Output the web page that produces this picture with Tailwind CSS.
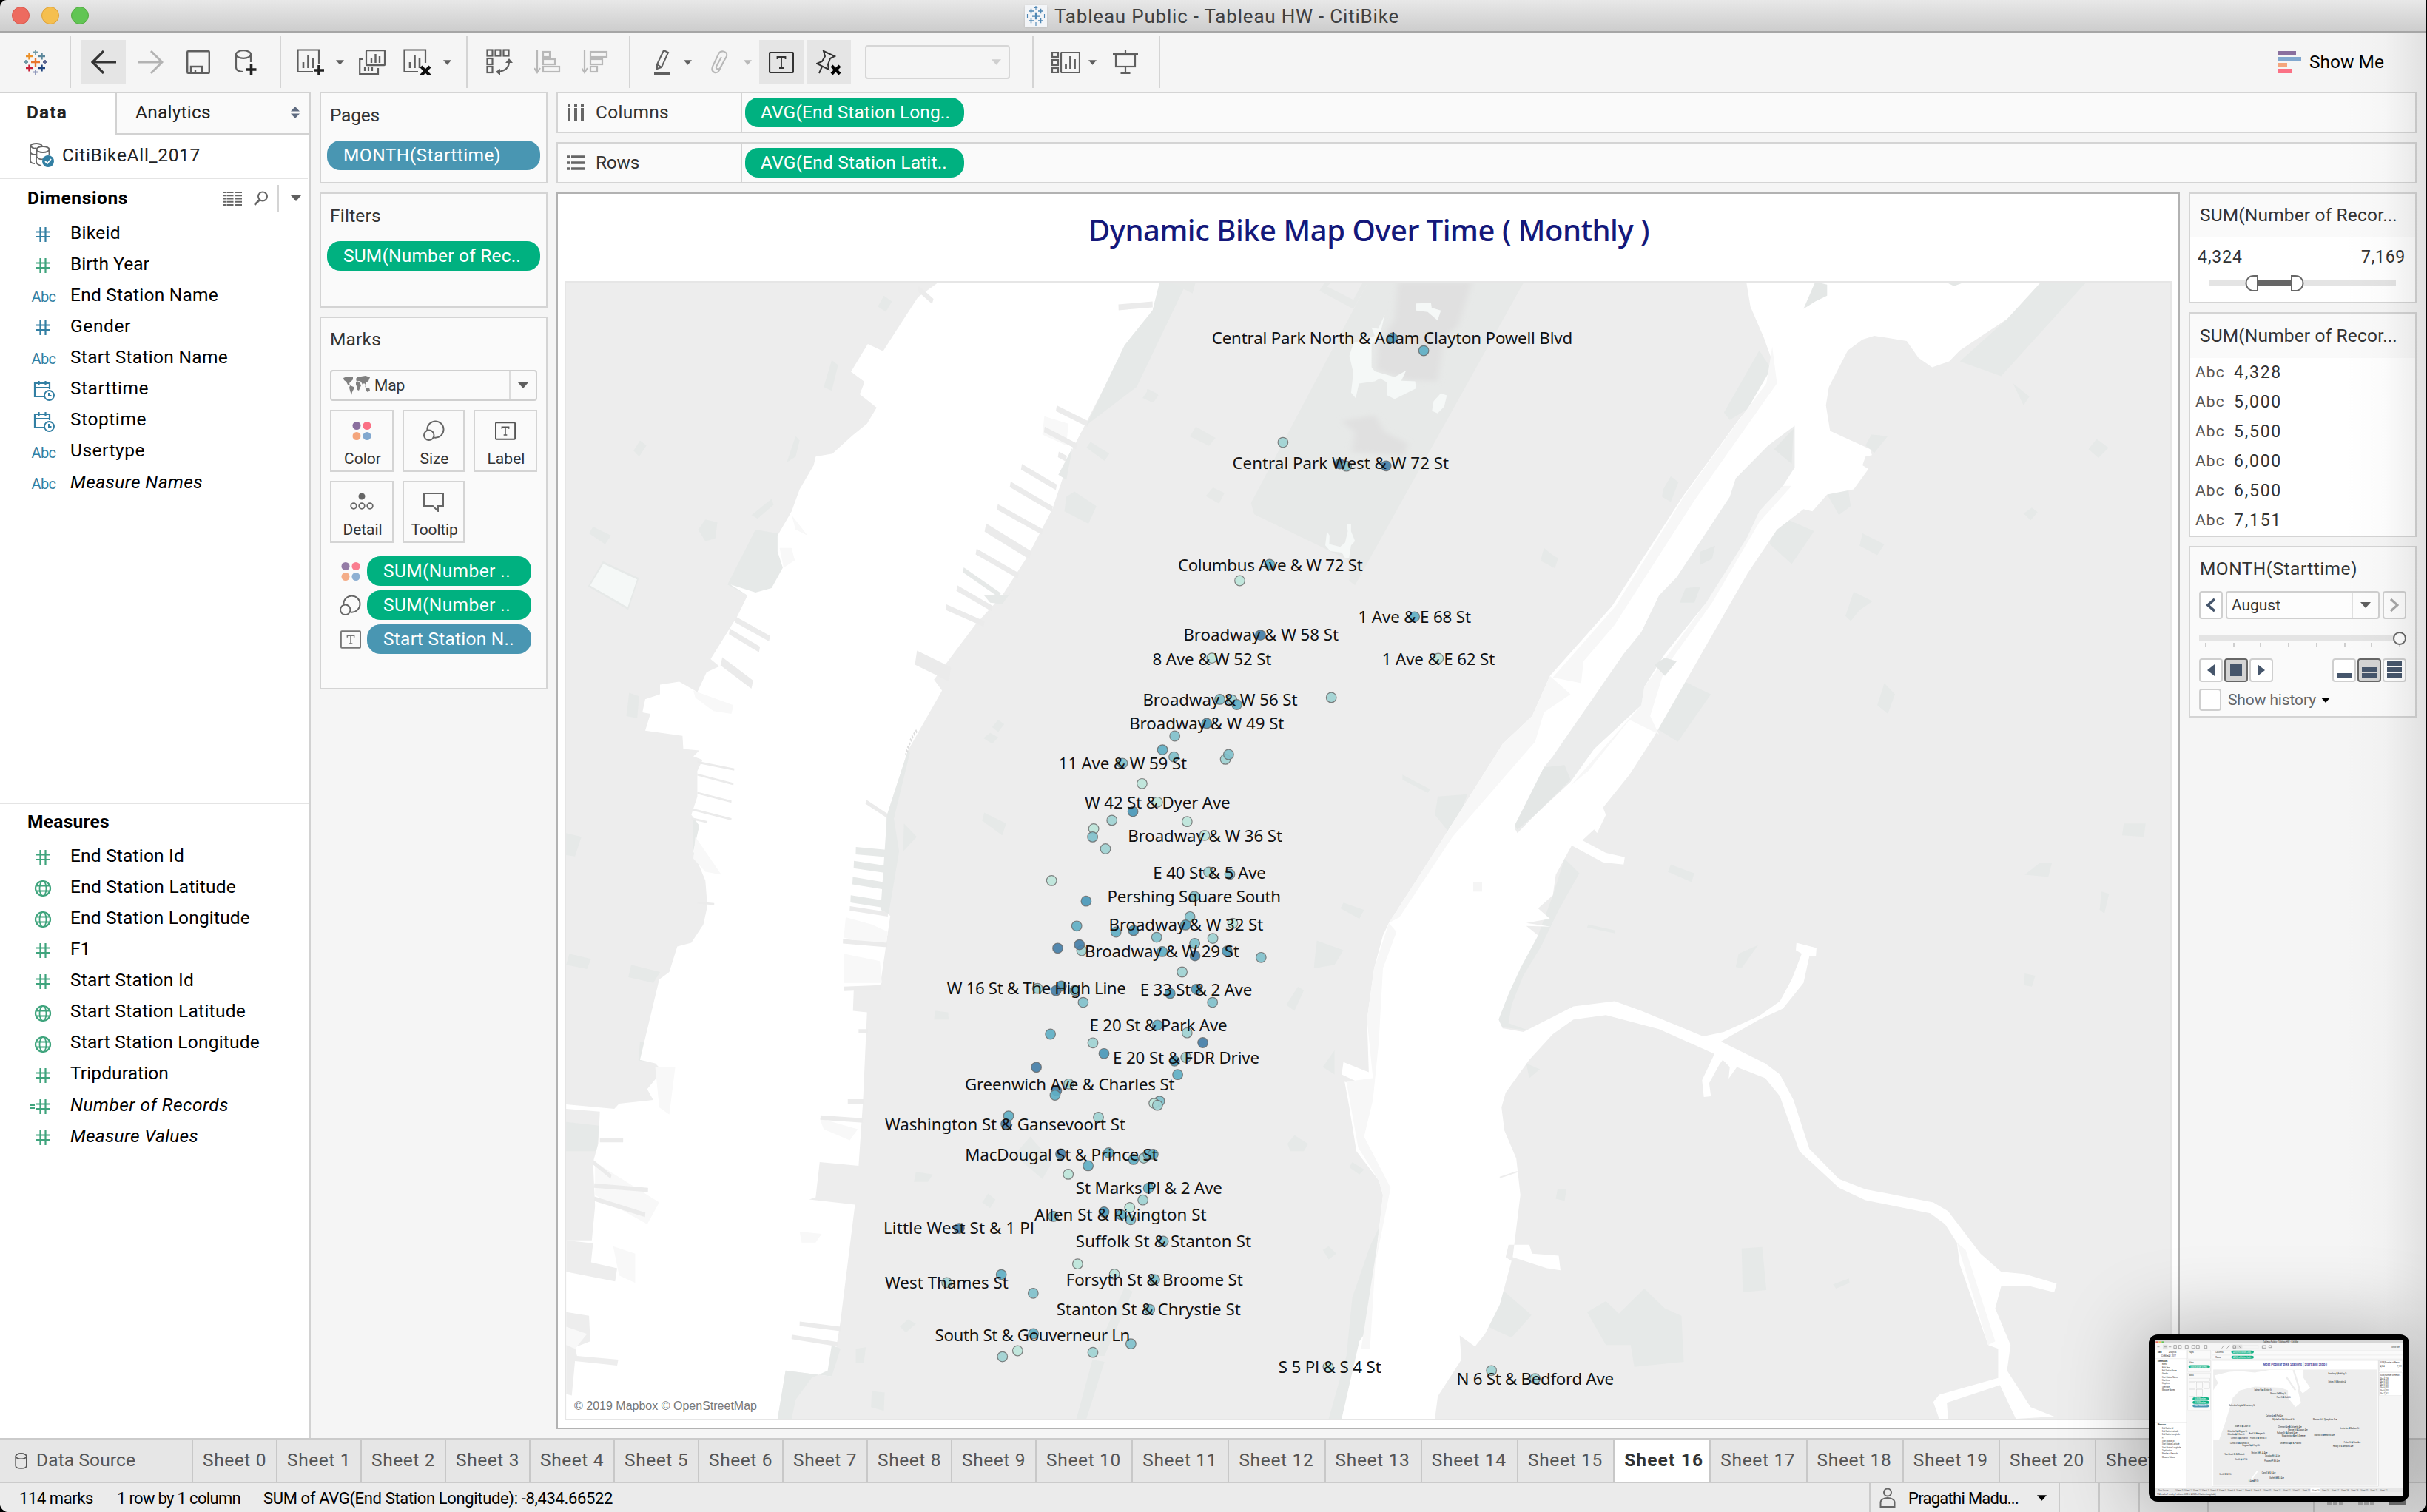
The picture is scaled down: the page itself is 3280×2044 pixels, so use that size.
<!DOCTYPE html>
<html lang="en">
<head>
<meta charset="utf-8">
<title>Tableau Public - Tableau HW - CitiBike</title>
<script src="https://cdn.jsdelivr.net/npm/@tailwindcss/browser@4"></script>
</head>
<body class="bg-black">
<svg width="0" height="0" class="absolute">
  <defs>
    <symbol id="hash" viewBox="0 0 20 20"><path d="M6.5 0V20M13.5 0V20M0 6.5H20M0 13H20" stroke="currentColor" stroke-width="2.2" fill="none"/></symbol>
    <symbol id="globe" viewBox="0 0 24 24"><circle cx="12" cy="12" r="10" fill="none" stroke="currentColor" stroke-width="2.2"/><ellipse cx="12" cy="12" rx="4.5" ry="10" fill="none" stroke="currentColor" stroke-width="1.8"/><path d="M3 8.5H21M3 15.5H21" stroke="currentColor" stroke-width="1.8"/></symbol>
    <symbol id="cal" viewBox="0 0 30 28"><path d="M14 22H2V4H22V12M2 10H22M7.500 1V7M16.500 1V7" stroke="currentColor" stroke-width="2.2" fill="none"/><circle cx="21.500" cy="20.500" r="6.500" fill="#fff" stroke="currentColor" stroke-width="2"/><path d="M21 17V21H24.500" stroke="currentColor" stroke-width="2" fill="none"/></symbol>
    <symbol id="dots4" viewBox="0 0 26 26"><circle cx="6" cy="6" r="5.500" fill="#8a6f9e"/><circle cx="20" cy="6" r="5.500" fill="#fb7185"/><circle cx="6" cy="20" r="5.500" fill="#f4a57c"/><circle cx="20" cy="20" r="5.500" fill="#82a8cf"/></symbol>
    <symbol id="size" viewBox="0 0 30 30"><circle cx="17" cy="13" r="11.500" fill="none" stroke="#666" stroke-width="2"/><circle cx="8" cy="21" r="7" fill="#fafafa" stroke="#666" stroke-width="2"/></symbol>
    <symbol id="tbox" viewBox="0 0 30 26"><rect x="1" y="1" width="28" height="24" rx="1" fill="none" stroke="currentColor" stroke-width="2"/><path d="M10 10V7.500H20V10M15 7.500V19M12.500 19H17.500" fill="none" stroke="currentColor" stroke-width="1.600"/></symbol>
    <symbol id="caret" viewBox="0 0 14 8"><path d="M0 0H14L7 8Z" fill="currentColor"/></symbol>
    <symbol id="plus" viewBox="0 0 8 8"><path d="M4 0V8M0 4H8" stroke="currentColor" stroke-width="1.800"/></symbol>
    <symbol id="cyl" viewBox="0 0 18 24"><ellipse cx="9" cy="5" rx="8" ry="4" fill="none" stroke="currentColor" stroke-width="1.800"/><path d="M1 5V19C1 24 17 24 17 19V5" fill="none" stroke="currentColor" stroke-width="1.800"/></symbol>
  </defs>
</svg>

<div class="relative flex h-[2044px] w-[3278px] flex-col overflow-hidden rounded-tl-[10px] rounded-b-[12px] bg-[#f5f5f5] font-['Roboto','Liberation_Sans',sans-serif] text-[24.500px] leading-none text-[#222]">

  <header class="flex h-11 shrink-0 items-center border-b-2 border-[#a6a6a6] bg-linear-to-b from-[#e8e8e8] to-[#cdcdcd]">
    <div class="ml-4 flex gap-4">
      <span class="size-6 rounded-full border border-[#d8574c] bg-[#ed6b5f]"></span>
      <span class="size-6 rounded-full border border-[#dba03a] bg-[#f5bf4f]"></span>
      <span class="size-6 rounded-full border border-[#51a73f] bg-[#61c554]"></span>
    </div>
    <svg class="ml-[1265px] bg-[#f3f5f8] text-[#4e87b4] shadow-sm" width="30" height="29" viewBox="0 0 30 29">
      <use href="#plus" x="10" y="9.500" width="10" height="10"/><use href="#plus" x="5" y="4.500" width="7" height="7"/><use href="#plus" x="18" y="4.500" width="7" height="7"/><use href="#plus" x="5" y="17.500" width="7" height="7"/><use href="#plus" x="18" y="17.500" width="7" height="7"/><use href="#plus" x="12.500" y="1" width="5" height="5"/><use href="#plus" x="12.500" y="23" width="5" height="5"/><use href="#plus" x="1" y="12" width="5" height="5"/><use href="#plus" x="24" y="12" width="5" height="5"/>
    </svg>
    <span class="ml-2.5 pt-0.5 whitespace-nowrap text-[26px] text-[#404040]" data-w="464">Tableau Public - Tableau HW - CitiBike</span>
  </header>

  <div class="flex h-20 shrink-0 items-center text-[#5f5f5f]">
    <svg class="ml-8" width="32" height="34" viewBox="0 0 32 34">
      <g stroke-width="2.400"><path d="M16 11V23M10 17H22" stroke="#e8762c"/><path d="M7.500 4.500V13.500M3 9H12" stroke="#eb9129"/><path d="M24.500 4.500V13.500M20 9H29" stroke="#5b879b"/><path d="M7.500 20.500V29.500M3 25H12" stroke="#c72037"/><path d="M24.500 20.500V29.500M20 25H29" stroke="#1f447e"/></g>
      <g stroke-width="1.800"><path d="M16 0V7M12.500 3.500H19.500" stroke="#7099a6"/><path d="M16 27V34M12.500 30.500H19.500" stroke="#8a93b8"/><path d="M3 14V20M0 17H6" stroke="#7099a6"/><path d="M29 14V20M26 17H32" stroke="#5b6591"/></g>
    </svg>
    <i class="ml-[30px] h-[70px] w-0.5 bg-[#d4d4d4]"></i>
    <div class="ml-3.5 flex h-15 w-15 items-center justify-center bg-[#e5e5e5]"><svg width="34" height="32" viewBox="0 0 34 32" fill="none" stroke="#333" stroke-width="3.200"><path d="M34 16H2M17 1L2 16L17 31"/></svg></div>
    <svg class="ml-[17px]" width="34" height="32" viewBox="0 0 34 32" fill="none" stroke="#b3b3b3" stroke-width="3"><path d="M0 16H32M17 1L32 16L17 31"/></svg>
    <svg class="ml-[31px]" width="32" height="32" viewBox="0 0 32 32" fill="none" stroke="currentColor" stroke-width="2.400"><rect x="1.200" y="1.200" width="29.600" height="29.600" rx="1"/><path d="M6 31V22H21V31M12 31V26"/></svg>
    <svg class="ml-[34px]" width="30" height="34" viewBox="0 0 30 34" fill="none" stroke="currentColor" stroke-width="2.200"><ellipse cx="11" cy="6.500" rx="10" ry="5.300"/><path d="M1 6.500V24C1 28 5 30 11 30M21 6.500V17"/><path d="M21.500 20V34M14.500 27H28.500" stroke="#222" stroke-width="3.600"/></svg>
    <i class="ml-[30px] h-[70px] w-0.5 bg-[#d4d4d4]"></i>
    <svg class="ml-[21px]" width="38" height="36" viewBox="0 0 38 36" fill="none" stroke="currentColor" stroke-width="2.200"><path d="M22 31H1.500V1.500H30V21"/><path d="M9 26V18M15.500 26V8M22 26V13" stroke-width="2.600"/><path d="M30 22V36M23 29H37" stroke="#222" stroke-width="3.600"/></svg>
    <svg class="ml-[15px]" width="11" height="7"><use href="#caret" width="11" height="7"/></svg>
    <svg class="ml-5" width="36" height="34" viewBox="0 0 36 34" fill="none" stroke="currentColor" stroke-width="2.200"><rect x="10" y="1.200" width="25" height="20" rx="1"/><path d="M17 18V12M22.500 18V6M28 18V9" stroke-width="2.400"/><path d="M6 13H1.200V33H26V25M8 29V24M13 29V24M18 29V24"/></svg>
    <svg class="ml-6" width="38" height="36" viewBox="0 0 38 36" fill="none" stroke="currentColor" stroke-width="2.200"><path d="M20 31H1.500V1.500H30V19"/><path d="M9 26V18M15.500 26V8M22 26V13" stroke-width="2.600"/><path d="M24 24L36 36M36 24L24 36" stroke="#111" stroke-width="4"/></svg>
    <svg class="ml-4" width="11" height="7"><use href="#caret" width="11" height="7"/></svg>
    <i class="ml-5 h-[70px] w-0.5 bg-[#d4d4d4]"></i>
    <svg class="ml-[25px]" width="36" height="36" viewBox="0 0 36 36" fill="none" stroke="currentColor" stroke-width="2.200"><rect x="1.500" y="1.500" width="7" height="8"/><rect x="12.500" y="1.500" width="7" height="8"/><rect x="23.500" y="1.500" width="7" height="8"/><rect x="1.500" y="13" width="7" height="8"/><rect x="1.500" y="24" width="7" height="8"/><path d="M31 17C31 26 26 30 16 31"/><path d="M26 19L31 13L36 19ZM19 27L13 31L19 36Z" fill="currentColor" stroke="none"/></svg>
    <svg class="ml-[29px]" width="36" height="32" viewBox="0 0 36 32" fill="none" stroke="#b8b8b8" stroke-width="2.200"><path d="M4 0V28M0 24L4 30L8 24"/><rect x="12" y="2" width="9" height="7"/><rect x="12" y="12" width="16" height="7"/><rect x="12" y="22" width="22" height="7"/></svg>
    <svg class="ml-7" width="36" height="32" viewBox="0 0 36 32" fill="none" stroke="#b8b8b8" stroke-width="2.200"><path d="M4 0V28M0 24L4 30L8 24"/><rect x="12" y="2" width="22" height="7"/><rect x="12" y="12" width="16" height="7"/><rect x="12" y="22" width="9" height="7"/></svg>
    <i class="ml-7 h-[70px] w-0.5 bg-[#d4d4d4]"></i>
    <svg class="ml-8" width="22" height="34" viewBox="0 0 22 34" fill="none" stroke="currentColor" stroke-width="2"><path d="M13 1L19 4L10 24L4 26L4 20ZM4 20L10 24"/><path d="M0 32H22" stroke-width="4"/></svg>
    <svg class="ml-[18px]" width="11" height="7"><use href="#caret" width="11" height="7"/></svg>
    <svg class="ml-[25px]" width="24" height="32" viewBox="0 0 24 32" fill="none" stroke="#b8b8b8" stroke-width="2"><path d="M19 13L12 27C9 33 0 30 3 22L11 5C14 -1 24 1 22 8L13 24C11 27 7 25 8 22L15 9"/></svg>
    <svg class="ml-[21px] text-[#b8b8b8]" width="11" height="7"><use href="#caret" width="11" height="7"/></svg>
    <div class="ml-[10px] flex size-15 items-center justify-center bg-[#e5e5e5] text-[#333]"><svg width="34" height="29" viewBox="0 0 34 29" fill="none" stroke="currentColor"><rect x="1" y="1" width="32" height="27" rx="1.500" stroke-width="2.200"/><path d="M11.500 10V7H22.500V10M17 7V22M14 22H20" stroke-width="1.800"/></svg></div>
    <div class="ml-1 flex size-15 items-center justify-center bg-[#e5e5e5]"><svg width="34" height="33" viewBox="0 0 34 33" fill="none" stroke="#333" stroke-width="2"><path d="M10 1L25 8L19 11L16 19L17 26L1 18L8 15L12 8ZM8 22L4 31"/><path d="M21 21L32 32M32 21L21 32" stroke="#000" stroke-width="4.200"/></svg></div>
    <div class="ml-[19px] flex h-[46px] w-[196px] items-center justify-end rounded-sm border-2 border-[#d6d6d6] pr-2.5 text-[#cfcfcf]"><svg width="13" height="8"><use href="#caret" width="13" height="8"/></svg></div>
    <i class="ml-[30px] h-[70px] w-0.5 bg-[#d4d4d4]"></i>
    <svg class="ml-6" width="39" height="29" viewBox="0 0 39 29" fill="none" stroke="currentColor" stroke-width="2.200"><rect x="1" y="1" width="8" height="6"/><rect x="1" y="11" width="8" height="7"/><rect x="1" y="22" width="8" height="6"/><rect x="13" y="1" width="25" height="27" rx="1"/><path d="M19.500 23V16M25.500 23V6M31.500 23V10" stroke-width="2.800"/></svg>
    <svg class="ml-[11px]" width="11" height="7"><use href="#caret" width="11" height="7"/></svg>
    <svg class="ml-[22px]" width="34" height="32" viewBox="0 0 34 32" fill="none" stroke="currentColor" stroke-width="2.200"><path d="M0 5H34" stroke-width="4"/><rect x="4" y="6" width="26" height="16"/><path d="M17 0V4M17 22V30M10.500 31H23.500"/></svg>
    <i class="ml-[28px] h-[70px] w-0.5 bg-[#d4d4d4]"></i>
    <svg class="ml-[1510px]" width="32" height="30"><path d="M0 0H25V6H0Z" fill="#8a6f9e"/><path d="M0 8H32V14H0Z" fill="#82a8cf"/><path d="M0 16H13V22H0Z" fill="#f4a57c"/><path d="M0 24H19V30H0Z" fill="#fb7185"/></svg>
    <span class="ml-[11px] text-black" data-w="99">Show Me</span>
  </div>

  <main class="flex h-[1820px] shrink-0">
    <aside class="flex w-[420px] shrink-0 flex-col border-t-2 border-r-2 border-[#d2d2d2] bg-white">
      <div class="flex h-14 shrink-0">
        <div class="flex w-[156px] items-center pb-1 pl-9 font-bold"><span data-w="53">Data</span></div>
        <div class="flex flex-1 items-center border-b-2 border-l-2 border-[#d2d2d2] bg-[#fafafa] pb-0.5 pl-[25px]"><span data-w="100">Analytics</span>
          <svg class="ml-[110px] text-[#5f6b80]" width="12" height="16" viewBox="0 0 12 16"><path d="M0 6.500L6 0L12 6.500ZM0 9.500L6 16L12 9.500Z" fill="currentColor"/></svg></div>
      </div>
      <div class="flex h-[60px] w-[416px] shrink-0 items-center border-b-2 border-[#e4e4e4] pb-0.5 pl-10">
        <svg width="34" height="34" viewBox="0 0 34 34" fill="none" stroke="#666" stroke-width="1.800"><path d="M1 4V24C1 27 4 28 7 28M1 4C4 0 14 0 17 4M1 4C4 8 7 8 9 7M1 13C3 16 5 16 9 16M9 9V25C9 29 12 30 16 31"/><ellipse cx="18" cy="9" rx="8.500" ry="4"/><path d="M9.500 9V19C12 22 14 23 18 22M26.500 9V16"/><circle cx="25" cy="25" r="8" fill="#327fa3" stroke="none"/><path d="M21 25L24 28L29 22" stroke="#fff"/></svg>
        <span class="ml-2.5" data-w="185">CitiBikeAll_2017</span>
      </div>
      <div class="mt-2 flex h-9 shrink-0 items-center pl-[37px] font-bold text-black">
        <span data-w="134">Dimensions</span>
        <svg class="ml-[131px]" width="25" height="19" viewBox="0 0 25 19" stroke="#666" stroke-width="2" fill="none"><path d="M0 1H25M0 5.200H25M0 9.500H25M0 13.700H25M0 18H25" stroke-dasharray="3 1.500 9 1.500 10 1"/></svg>
        <svg class="ml-4" width="20" height="20" viewBox="0 0 20 20" fill="none" stroke="#666" stroke-width="2"><circle cx="12" cy="7.500" r="6"/><path d="M8 12L1 19" stroke-width="2.600"/></svg>
        <i class="ml-3 h-9 w-0.5 bg-[#d4d4d4]"></i>
        <svg class="ml-4 text-[#5f5f5f]" width="14" height="8"><use href="#caret" width="14" height="8"/></svg>
      </div>
      <div id="dims" class="mt-2 h-[793px] shrink-0 border-b-2 border-[#e4e4e4] text-black"></div>
      <div class="flex h-[49px] shrink-0 items-center pl-[37px] font-bold text-black"><span data-w="109">Measures</span></div>
      <div id="meas" class="text-black"></div>
    </aside>

    <section class="ml-3 flex w-[308px] shrink-0 flex-col gap-3 text-[#333]">
      <div class="flex h-[124px] flex-col border-2 border-[#d4d4d4] bg-[#fafafa] px-2">
        <div class="flex h-[64px] items-center pb-1 pl-1"><span data-w="65">Pages</span></div>
        <div class="flex h-10 items-center rounded-[18px] bg-[#4996b2] pl-[22px] text-white"><span data-w="211">MONTH(Starttime)</span></div>
      </div>
      <div class="flex h-[156px] flex-col border-2 border-[#d4d4d4] bg-[#fafafa] px-2">
        <div class="flex h-[64px] items-center pb-1 pl-1"><span data-w="67">Filters</span></div>
        <div class="flex h-10 items-center rounded-[18px] bg-[#00b180] pl-[22px] text-white"><span data-w="238">SUM(Number of Rec..</span></div>
      </div>
      <div class="flex h-[504px] flex-col border-2 border-[#d4d4d4] bg-[#fafafa] px-3">
        <div class="flex h-[61px] items-center pb-0.5"><span data-w="67">Marks</span></div>
        <div class="mt-[9px] flex h-[42px] w-[280px] items-center rounded-sm border-2 border-[#cfcfcf] text-[21px]">
          <svg class="ml-4" width="36" height="26" viewBox="0 0 36 26" fill="#808080"><path d="M0 3L5 1L9 2L13 1L13 5L10 8L8 10L9 13L6 12L4 8L1 6ZM9 13L14 15L14 18L12 22L11 26L9 20L8 16ZM17 4L19 2L24 1L30 0L36 2L34 7L31 9L31 13L28 10L26 12L24 8L21 7L18 8ZM17 9L22 9L24 13L21 20L19 19L19 14L17 13ZM30 17L35 16L36 20L33 22L30 20ZM29 13L31 15L30 16Z"/></svg>
          <span class="ml-1.5" data-w="39">Map</span>
          <i class="ml-[143px] h-full w-0.5 bg-[#dcdcdc]"></i>
          <svg class="ml-2.5 text-[#5f5f5f]" width="14" height="8"><use href="#caret" width="14" height="8"/></svg>
        </div>
        <div id="marks" class="mt-3 grid grid-cols-[86px_84px_86px] gap-x-3 gap-y-3 text-[21px]"></div>
        <div class="mt-[18px] flex flex-col gap-1.5 text-white">
          <div class="flex items-center"><svg class="ml-[15px] opacity-90" width="26" height="27"><use href="#dots4" width="26" height="27"/></svg><div class="ml-[9px] flex h-10 w-[222px] items-center rounded-[18px] bg-[#00b180] pl-[22px]"><span data-w="170">SUM(Number ..</span></div></div>
          <div class="flex items-center"><svg class="ml-[13px]" width="29" height="29"><use href="#size" width="29" height="29"/></svg><div class="ml-2 flex h-10 w-[222px] items-center rounded-[18px] bg-[#00b180] pl-[22px]"><span data-w="170">SUM(Number ..</span></div></div>
          <div class="flex items-center"><svg class="ml-[14px] text-[#777]" width="28" height="25"><use href="#tbox" width="28" height="25"/></svg><div class="ml-2 flex h-10 w-[222px] items-center rounded-[18px] bg-[#4996b2] pl-[22px]"><span data-w="175">Start Station N..</span></div></div>
        </div>
      </div>
    </section>

    <div class="ml-3 flex w-[2514px] shrink-0 flex-col gap-3">
      <div class="flex h-14 shrink-0 items-center border-2 border-[#d4d4d4] bg-[#fafafa] text-[#333]">
        <svg class="ml-3" width="24" height="24" viewBox="0 0 24 24" stroke="#666" stroke-width="4"><path d="M3 0V4M12 0V4M21 0V4M3 6V24M12 6V24M21 6V24"/></svg>
        <span class="ml-[15px]" data-w="97">Columns</span>
        <i class="ml-[99px] h-full w-0.5 bg-[#d4d4d4]"></i>
        <div class="ml-1 flex h-10 w-[296px] items-center rounded-[18px] bg-[#00b180] pl-[21px] text-white"><span data-w="254">AVG(End Station Long..</span></div>
      </div>
      <div class="flex h-14 shrink-0 items-center border-2 border-[#d4d4d4] bg-[#fafafa] text-[#333]">
        <svg class="ml-3" width="24" height="20" viewBox="0 0 24 20" stroke="#666" stroke-width="3.600"><path d="M0 2H4M0 10H4M0 18H4M6 2H24M6 10H24M6 18H24"/></svg>
        <span class="ml-[15px]" data-w="57">Rows</span>
        <i class="ml-[139px] h-full w-0.5 bg-[#d4d4d4]"></i>
        <div class="ml-1 flex h-10 w-[296px] items-center rounded-[18px] bg-[#00b180] pl-[21px] text-white"><span data-w="250">AVG(End Station Latit..</span></div>
      </div>

      <div class="flex h-[1672px] gap-3">
        <div class="flex h-[1672px] w-[2194px] flex-col items-center border-2 border-[#b2b2b2] bg-white">
          <h1 class="flex h-[118px] items-start pt-[27px] font-['Noto_Sans','Open_Sans',sans-serif] text-[40px] leading-[44px] font-medium text-[#14187a]"><span class="whitespace-pre" data-w="756">Dynamic Bike Map Over Time ( Monthly )</span></h1>
          <svg id="map" class="border-2 border-[#e6e6e6] font-['Noto_Sans','Open_Sans',sans-serif]" width="2172" height="1540" viewBox="765 382 2168 1536">
            <rect x="764" y="380" width="2172" height="1540" fill="#ededed"/>
            <!-- New Jersey shore, Hudson River -->
            <g transform="translate(750 370) scale(.54209 .98853)">
              <g fill="#e6e9e8">
                <path d="M555 355L500 350L430 425L480 440L500 436L540 432L572 400Z"/>
                <path d="M345 735L390 770L385 795L345 795ZM28 1160L110 1165L105 1200L28 1200ZM190 945L262 955L245 970L183 962ZM212 1050L303 1062L295 1082L208 1076Z"/>
                <path d="M85 355L95 346L140 358L125 370ZM357 350L375 336L405 340L400 362L375 366ZM578 258L600 222L610 228L600 250ZM196 242L212 228L228 235L210 250ZM670 155L690 118L706 125L690 160ZM28 765L66 770L50 797L28 795ZM36 930L90 937L80 951L28 945ZM178 605L185 573L210 578L205 608ZM490 330L540 308L545 316L505 335ZM805 45L820 30L840 38L825 52Z"/>
              </g>
              <path d="M958 11L905 32L860 70L818 106L780 96L738 134L772 148L760 165L802 183L778 205L740 222L692 246L650 250L645 262L610 295L590 325L555 358L555 380L568 402L540 430L500 436L438 425L480 440L455 468L388 527L410 537L378 545L355 572L310 558L262 562L262 575L225 582L218 600L238 602L225 625L318 632L320 650L360 652L345 660L368 665L355 680L355 715L340 740L360 755L345 790L375 830L380 865L370 890L340 915L305 920L285 955L260 965L212 1075L250 1080L268 1090L230 1115L245 1130L160 1135L148 1142L28 1136L28 1142L112 1146L108 1190L95 1215L100 1275L92 1322L28 1322L28 1566L555 1566L575 1500L690 1508L712 1432L748 1273L634 1266L650 1263L660 1215L757 1220L768 1132L778 1010L743 1008L745 978L810 977L836 878L815 870L828 792L825 745L880 652L965 570L945 555L1000 515L1048 480L1115 440L1180 385L1240 322L1290 240L1325 203L1370 155L1420 98L1490 50L1508 11Z" fill="#fff"/>
              <path d="M28 1322L95 1326L90 1352L155 1360L150 1378L28 1365ZM28 1420L85 1425L88 1460L50 1468L55 1480L158 1485L155 1493L50 1487L42 1534L28 1532Z" fill="#ededed"/>
              <g fill="#f8f8f8"><path d="M345 570L445 590L440 602L395 598L350 580ZM560 375L590 375L598 392L570 402ZM590 330L630 358L600 350ZM350 770L415 822L375 818L345 800ZM250 1085L300 1085L285 1150L260 1140ZM1220 195L1280 205L1275 235L1215 220ZM725 880L790 890L830 900L825 920L720 908ZM720 930L810 940L815 970L720 970ZM610 1310L665 1313L650 1325L615 1325ZM145 1330L200 1340L200 1380L160 1370ZM100 1215L260 1270L230 1300L100 1260ZM660 1155L755 1170L735 1185L670 1170ZM28 1440L80 1450L50 1470L28 1465Z"/></g>
              <g stroke="#ebebeb" fill="none" stroke-width="8">
                <path d="M1250 184L1330 206M1220 213L1300 236M1255 247L1275 253M1163 264L1250 292M1135 288L1240 322M1103 319L1215 353M1050 380L1155 413M1002 430L1090 458M975 456L1070 479M450 473L535 499M435 489L510 514M905 20L942 38M1405 46L1490 42"/>
                <path d="M1073 347L1185 385M415 530L492 562" stroke-width="12"/>
                <path d="M900 525L985 548" stroke-width="20"/>
                <path d="M355 668L447 678M355 685L445 698M355 710L440 722M345 733L440 746M340 745L380 750" stroke-width="3"/>
                <path d="M775 722L830 742M610 1436L712 1443M590 1454L705 1464M662 1154L768 1158M718 913L828 918M735 868L830 876M720 978L812 976M730 1132L770 1132M757 1036L780 1036M98 1247L232 1253M98 1265L225 1287M95 1215L140 1235M112 1185L170 1185" stroke-width="6"/>
                <path d="M355 860L397 862" stroke-width="3"/>
              </g>
              <g stroke="#e6e9e8" fill="none"><path d="M750 789L830 793M745 808L830 815M742 830L830 838M737 855L830 863" stroke-width="10"/><path d="M1018 405L1110 440" stroke-width="7"/></g>
              <g fill="#e6e9e8">
                <path d="M828 740L880 652L885 655L845 745L858 790L832 875L812 870ZM870 752L902 770L868 790ZM1420 98L1490 50L1508 11L1568 11L1568 20L1450 155L1325 207L1370 155ZM1275 305L1295 298L1350 318L1330 342L1270 325ZM1325 238L1335 230L1382 246L1370 256ZM1065 748L1070 737L1125 752L1115 768ZM1070 440L1130 440L1145 430L1115 452L1085 450ZM1255 275L1290 238L1275 282ZM575 1500L690 1508L712 1470L690 1465L680 1500L640 1510L600 1540L590 1566L555 1566ZM1185 1180L1240 1215L1215 1238L1145 1205ZM948 1008L980 1010L982 1020L945 1020ZM900 1228L942 1232L930 1242L895 1242ZM1068 635L1085 628L1105 634L1090 643ZM1090 620L1105 610L1120 616L1105 627Z"/>
                <path d="M860 1440L880 1430L900 1436L875 1448ZM1065 1270L1080 1258L1098 1266L1085 1278ZM750 1470L775 1468L770 1490L750 1490ZM790 1528L822 1530L820 1555L788 1550ZM1420 1386L1440 1392L1370 1480L1345 1480ZM1340 1485L1370 1488L1325 1566L1300 1566ZM1465 170L1480 158L1504 165L1490 176Z"/>
              </g>
              <path d="M85 427L120 395L207 417L182 458Z" fill="#f5f8f7" stroke="#e6e9e8" stroke-width="3"/>
              <path d="M902 625L890 634L882 645L875 658" stroke="#ddd" stroke-width="5" stroke-dasharray="3 3" fill="none"/>
              <rect x="37" y="1536" width="480" height="26" fill="#fff" fill-opacity=".55"/>
            </g>
            <!-- Central Park -->
            <g transform="translate(1550 370) scale(.44643 .38265)">
              <defs><filter id="soft" x="-20%" y="-20%" width="140%" height="140%"><feGaussianBlur stdDeviation="9"/></filter></defs>
              <path d="M670 28L315 810L325 850L590 1000L622 1020L612 1085L630 1100L1142 28Z" fill="#e7e9e8"/>
              <path d="M540 28L670 28L625 125L522 60ZM68 28L148 28L138 70ZM148 540L208 580L188 608L130 575ZM200 755L235 775L218 812L178 785ZM0 408L35 430L20 455L0 445ZM1205 982L1246 1005L1235 1040L1193 1015Z" fill="#e7e9e8"/>
              <path d="M560 28L655 28L625 92L545 45Z" fill="#ededed"/>
              <g fill="#e0e0e0" filter="url(#soft)"><path d="M760 28L985 28L940 190L900 220L880 380L790 375L695 340L700 250L750 160ZM590 520L690 500L720 560L790 600L780 640L620 630L630 560Z"/></g>
              <g fill="#f5f8f7"><path d="M720 145L700 195L680 190L690 220L625 245L613 290L625 350L618 420L632 440L642 388L690 380L706 370L728 385L728 430L750 443L815 405L812 380L770 378L785 342L750 365L690 345L680 330L680 250L705 220ZM815 105L860 103L862 120L890 130L880 165L850 135L815 130ZM890 422L908 430L900 470L880 493L863 485L868 450ZM605 883L618 883L618 910L630 945L618 960L612 1005L600 1005L590 985L555 980L540 960L545 910L553 925L552 955L585 965L600 950L608 910Z"/></g>
            </g>
            <!-- East River, Newtown Creek -->
            <g transform="translate(1700 370) scale(.79719 .98853)">
              <g fill="#e6e9e8">
                <path d="M870 130L830 185L800 200L790 190L850 105ZM1328 11L1405 11L1260 140L1190 120L1270 62ZM1280 150L1308 168L1298 180ZM1040 220L1068 222L1045 245L1030 235ZM985 330L1005 318L1000 290L965 302ZM870 350L895 335L943 352L905 397L868 370ZM1025 355L1062 370L1050 385L1020 372ZM1408 240L1422 226L1442 238L1425 252ZM1298 328L1312 320L1322 326L1310 337ZM1010 435L1042 448L1020 460L1005 475L996 468ZM1062 560L1080 575L1068 602L1050 590ZM690 545L768 575L712 640L672 620ZM1468 752L1505 752L1502 770L1465 768ZM1325 806L1346 806L1340 825L1300 822ZM1430 845L1443 848L1435 875L1427 870ZM695 818L700 808L740 820L735 832ZM815 930L848 918L820 950L810 948ZM1300 957L1318 960L1312 975L1298 973Z"/>
                <path d="M500 850L520 800L545 820L510 870L480 920L450 960L430 1000L425 1025L460 1035L410 1030L408 1015L440 950L475 905ZM305 715L355 712L330 770L300 740ZM96 940L100 912L145 925L130 945L95 950ZM62 1008L48 1000L68 975L78 980ZM110 1085L130 1062L130 1095ZM145 860L180 870L172 882L140 868ZM820 1333L855 1331L862 1390L822 1393ZM558 1420L590 1405L612 1422L655 1388L690 1415L718 1425L722 1488L638 1495L632 1465L590 1465ZM975 1382L1002 1374L1003 1380L980 1388ZM395 1405L415 1390L464 1424L430 1455L390 1440ZM508 1252L523 1252L520 1268L505 1265ZM455 1080L478 1088L460 1100ZM50 1190L62 1178L85 1190L78 1200L55 1200ZM110 1335L120 1330L133 1340L120 1348ZM205 1305L190 1330L160 1400L150 1480L120 1566L142 1566L172 1460L185 1445Z"/>
                <path d="M687 295L700 277L713 285L700 312L685 305ZM485 375L508 390L500 402L480 390ZM245 685L292 705L288 710L245 692ZM560 890L606 898L605 902L558 894ZM160 1215L180 1225L172 1232L155 1222Z"/>
              </g>
              <path d="M828 11L835 45L858 88L870 115L870 130L830 185L815 200L720 305L600 455L495 550L465 605L415 643L300 790L222 888L212 905L197 950L185 1020L188 1092L145 1078L142 1095L168 1105L165 1110L147 1105L155 1140L167 1200L205 1240L212 1260L205 1310L185 1445L172 1460L142 1566L300 1566L305 1535L345 1485L342 1452L368 1467L385 1450L410 1410L430 1350L420 1345L425 1328L460 1328L465 1340L510 1343L513 1363L490 1360L432 1345L445 1260L438 1210L418 1172L413 1140L420 1120L460 1075L500 1040L535 1020L590 1014L680 1033L774 1067L753 1103L756 1126L768 1125L765 1107L782 1082L788 1075L800 1085L798 1101L812 1085L860 1100L885 1125L918 1200L985 1250L1030 1267L1140 1285L1165 1300L1185 1325L1190 1355L1238 1465L1255 1470L1255 1510L1155 1533L1145 1543L1155 1566L1170 1566L1168 1544L1258 1520L1285 1566L1350 1563L1310 1550L1270 1500L1276 1465L1250 1415L1260 1385L1310 1385L1350 1393L1354 1381L1300 1368L1260 1365L1225 1340L1170 1282L1145 1270L1030 1252L985 1238L935 1197L908 1130L885 1095L860 1080L785 1050L850 1020L890 1005L925 970L935 933L946 933L947 922L913 915L912 925L922 930L905 965L885 995L850 1015L790 1037L755 1043L650 1008L605 995L535 1002L450 1037L415 1032L408 1020L425 985L445 950L475 905L455 892L497 893L455 888L495 882L475 868L500 850L505 822L532 782L585 805L620 808L622 798L590 792L550 775L570 760L575 765L590 740L585 730L630 685L670 635L830 410L880 350L925 322L940 325L965 302L1010 295L1035 267L1025 262L1030 250L1041 248L1038 240L970 215L963 180L968 155L1000 105L1025 90L1045 85L1100 92L1120 115L1143 128L1172 120L1190 105L1270 62L1328 11Z" fill="#fff"/>
              <g fill="#f7f7f7"><path d="M872 100L862 150L825 190L722 305L606 455L500 552L548 560L552 530L605 480L740 310L845 190L880 150ZM495 550L465 605L415 643L300 790L222 888L240 880L330 770L470 640L485 600L530 575ZM222 888L197 950L185 1020L195 1100L150 1105L170 1195L205 1240L212 1260L205 1310L200 1350L225 1250L180 1180L195 1130L205 1050L212 950L235 900ZM890 290L850 325L830 360L760 450L655 565L650 590L530 700L560 680L630 610L680 630L665 605L690 540L770 450L850 340L905 290ZM200 1340L175 1470L190 1470ZM1185 1325L1200 1335L1250 1460L1238 1465Z"/></g>
              <path d="M910 208L865 235L810 280L800 305L710 415L680 440L650 490L620 520L500 660L485 675L435 758L440 765L470 740L530 695L570 650L650 590L655 565L690 520L760 450L830 360L850 325L890 290L910 265Z" fill="#ebecec"/>
              <g fill="#e4e7e6"><path d="M908 212L875 240L905 260ZM485 675L520 672L530 692L470 740L440 760L435 755ZM725 430L750 428L740 450L715 450ZM672 535L690 525L710 530L690 550ZM750 380L775 372L770 390L750 398Z"/><path d="M925 48L945 11L965 15L965 30L945 38Z"/><path d="M1165 11L1200 11L1180 17Z"/></g>
              <path d="M410 1236L440 1228M418 1165L425 1175" stroke="#ededed" stroke-width="2"/>
              <path d="M365 832L380 832L380 845L365 845Z" fill="#f5f5f5"/>
            </g>
          </svg>
        </div>

        <div class="flex w-[308px] flex-col gap-3 text-[#333]">
          <div class="h-[150px] shrink-0 border-2 border-[#d4d4d4] bg-white">
            <div class="flex h-[58px] items-center bg-[#fafafa] pl-[13px]"><span data-w="265">SUM(Number of Recor...</span></div>
            <div class="flex h-[52px] items-center justify-between pt-0.5 pr-[15px] pl-2.5 text-[23px]"><span data-w="59">4,324</span><span data-w="58">7,169</span></div>
            <svg class="ml-[26px]" width="252" height="24" viewBox="0 0 252 24"><path d="M0 11H252" stroke="#e4e4e4" stroke-width="8"/><path d="M66 11H112" stroke="#666" stroke-width="8"/><path d="M65 1V21H60C46 21 46 1 60 1ZM111 1V21H116C130 21 130 1 116 1Z" fill="#fff" stroke="#666" stroke-width="2"/></svg>
          </div>
          <div class="h-[304px] shrink-0 border-2 border-[#d4d4d4] bg-white">
            <div class="flex h-[60px] items-center bg-[#fafafa] pl-[13px]"><span data-w="265">SUM(Number of Recor...</span></div>
            <div id="legend"></div>
          </div>
          <div class="flex h-[232px] shrink-0 flex-col border-2 border-[#d4d4d4] bg-[#fafafa] px-3">
            <div class="flex h-[59px] items-center pl-px"><span data-w="211">MONTH(Starttime)</span></div>
            <div class="flex h-[38px] items-stretch gap-1 text-[21px]">
              <div class="flex w-8 items-center justify-center rounded-sm border-2 border-[#cfcfcf] bg-white"><svg width="12" height="18" viewBox="0 0 12 18" fill="none" stroke="#46566c" stroke-width="3.600"><path d="M11 1L2 9L11 17"/></svg></div>
              <div class="flex w-[208px] items-center rounded-sm border-2 border-[#cfcfcf] bg-white/50 pl-1.5"><span data-w="64">August</span><i class="ml-[98px] h-full w-0.5 bg-[#e0e0e0]"></i><svg class="ml-2.5 text-[#5f5f5f]" width="14" height="8"><use href="#caret" width="14" height="8"/></svg></div>
              <div class="flex w-8 items-center justify-center rounded-sm border-2 border-[#cfcfcf] bg-white/50"><svg width="12" height="18" viewBox="0 0 12 18" fill="none" stroke="#a8a8a8" stroke-width="3.200"><path d="M1 1L10 9L1 17"/></svg></div>
            </div>
            <svg class="mt-[17px] shrink-0" width="280" height="24" viewBox="0 0 280 24"><path d="M0 9H280" stroke="#e4e4e4" stroke-width="8"/><path d="M9 15V21M47 15V21M83 15V21M121 15V21M159 15V21M197 15V21M233 15V21M271 15V21" stroke="#cfcfcf" stroke-width="2"/><circle cx="271" cy="9" r="8" fill="#fff" stroke="#666" stroke-width="2"/></svg>
            <div class="mt-3 flex h-8 shrink-0 gap-0.5">
              <div class="flex w-8 items-center justify-center rounded-sm border-2 border-[#cfcfcf] bg-white"><svg width="10" height="16"><path d="M10 0V16L0 8Z" fill="#46566c"/></svg></div>
              <div class="flex w-8 items-center justify-center rounded-sm border-2 border-[#666] bg-[#d4d4d4]"><i class="size-4 bg-[#46566c]"></i></div>
              <div class="flex w-8 items-center justify-center rounded-sm border-2 border-[#cfcfcf] bg-white"><svg width="10" height="16"><path d="M0 0V16L10 8Z" fill="#46566c"/></svg></div>
              <div class="ml-[78px] flex w-8 flex-col items-center justify-end rounded-sm border-2 border-[#cfcfcf] bg-white pb-1"><i class="h-1.5 w-5 bg-[#46566c]"></i></div>
              <div class="flex w-8 flex-col items-center justify-end gap-0.5 rounded-sm border-2 border-[#666] bg-[#d4d4d4] pb-1"><i class="h-1.5 w-5 bg-[#46566c]"></i><i class="h-1.5 w-5 bg-[#46566c]"></i></div>
              <div class="flex w-8 flex-col items-center justify-end gap-0.5 rounded-sm border-2 border-[#cfcfcf] bg-white pb-1"><i class="h-1.5 w-5 bg-[#46566c]"></i><i class="h-1.5 w-5 bg-[#46566c]"></i><i class="h-1.5 w-5 bg-[#46566c]"></i></div>
            </div>
            <div class="mt-[9px] flex h-[30px] items-center text-[21px] text-[#666]"><i class="size-[30px] rounded-sm border-2 border-[#cfcfcf] bg-white"></i><span class="ml-[9px]" data-w="117">Show history</span><svg class="ml-2 text-black" width="14" height="7"><use href="#caret" width="14" height="7"/></svg></div>
          </div>
        </div>
      </div>
    </div>
  </main>

  <nav id="tabs" class="flex h-[61px] shrink-0 items-stretch border-y-2 border-[#cbcbcb] bg-[#e6e6e6] text-[#555]">
    <div class="flex w-[261px] shrink-0 items-center border-r-2 border-[#c8c8c8] pl-5"><svg width="17" height="22"><use href="#cyl" width="17" height="22"/></svg><span class="ml-3" data-w="132">Data Source</span></div>
  </nav>
  <footer class="flex h-[39px] shrink-0 items-center bg-[#ebebeb] text-[22px] text-black">
    <span class="ml-[26px] pt-0.5" data-w="98">114 marks</span>
    <span class="ml-[34px] pt-0.5" data-w="165">1 row by 1 column</span>
    <span class="ml-[33px] pt-0.5" data-w="470">SUM of AVG(End Station Longitude): -8,434.66522</span>
    <i class="ml-[1700px] h-full w-0.5 bg-[#cbcbcb]"></i>
    <svg class="ml-3" width="22" height="27" viewBox="0 0 22 27" fill="none" stroke="#666" stroke-width="2"><circle cx="11" cy="6.500" r="5"/><path d="M1.500 26V20C1.500 12 20.500 12 20.500 20V26Z"/></svg>
    <span class="ml-[17px] pt-0.5" data-w="147">Pragathi Madu...</span>
    <svg class="ml-[27px]" width="13" height="8"><use href="#caret" width="13" height="8"/></svg>
    <i class="ml-4 h-full w-0.5 bg-[#cbcbcb]"></i><i class="ml-[52px] h-full w-0.5 bg-[#cbcbcb]"></i><i class="ml-[52px] h-full w-0.5 bg-[#cbcbcb]"></i><i class="ml-[91px] h-full w-0.5 bg-[#cbcbcb]"></i><i class="ml-[141px] h-full w-0.5 bg-[#cbcbcb]"></i>
    <svg class="ml-[17px]" width="110" height="24" viewBox="0 0 110 24"><path d="M0 10H6V22H0ZM8 10H14V22H8ZM16 10H22V22H16ZM42 10H48V22H42ZM50 10H56V22H50ZM58 10H64V22H58Z" fill="#b5b5b5"/><path d="M84 10H106V22H84Z" fill="#777"/></svg>
  </footer>

  <div class="pointer-events-none absolute top-11 right-0 bottom-0 w-[110px] bg-linear-to-r from-black/0 via-black/[0.015] to-black/[0.08]"></div>

  <!-- Floating recording preview -->
  <div class="absolute top-[1804px] left-[2904px] h-[226px] w-[352px] rounded-xl border-8 border-black bg-white shadow-[0_4px_110px_10px_rgba(0,0,0,0.28)]">
    <svg id="mini" class="block h-full w-full font-['Roboto',sans-serif]" viewBox="828 98 675 629" preserveAspectRatio="none">
      <rect x="828" y="98" width="675" height="629" fill="#f5f5f5"/>
      <rect x="828" y="98" width="675" height="12" fill="#d6d6d6"/>
      <path d="M831 102H836V107H831Z" fill="#ed6b5f"/><path d="M839 102H844V107H839Z" fill="#f5bf4f"/><path d="M847 102H852V107H847Z" fill="#61c554"/>
      <rect x="850" y="115" width="13" height="18" fill="#e2e2e2"/><rect x="1038" y="115" width="28" height="18" fill="#e2e2e2"/><rect x="1068" y="117" width="41" height="14" fill="none" stroke="#ddd"/>
      <g fill="none" stroke="#777" stroke-width="1.500"><path d="M835 124H841M853 124H860M866 124H873M880 118H887V130H880ZM893 118H900V130H893ZM911 118H919V130H911ZM929 118H937V130H929ZM941 118H949V130H941ZM963 118H970V130H963ZM1010 130L1016 118M1024 130L1031 118M1041 119H1048V129H1041ZM1055 119L1063 130M1120 119H1130V129H1120ZM1138 119H1145V127H1138Z"/></g>
      <rect x="828" y="138" width="86" height="556" fill="#fff"/><path d="M914 138V694M828 432H914M828 172H914" stroke="#ddd"/>
      <g fill="#fafafa" stroke="#ddd"><rect x="918" y="138" width="62" height="35"/><rect x="918" y="180" width="62" height="45"/><rect x="918" y="231" width="62" height="151"/><rect x="984" y="138" width="518" height="15"/><rect x="984" y="158" width="518" height="15"/></g>
      <rect x="984" y="179" width="451" height="511" fill="#fff" stroke="#ccc"/><rect x="987" y="216" width="444" height="471" fill="#ededed"/>
      <path d="M987 300L1000 270L990 240L1030 225L1060 222L1100 228L1140 218L1232 216L1232 250L1250 290L1230 312L1215 290L1225 350L1210 368L1190 330L1190 300L1170 290L1100 285L1060 300L1040 330L1030 380L1020 430L1003 500L987 500Z" fill="#fff"/>
      <path d="M1089 664L1107 627" stroke="#fff" stroke-width="4"/>
      <path d="M1205 218L1222 300M1185 245L1210 300" stroke="#ededed" stroke-width="5"/>
      <g fill="#fff" stroke="#ddd"><rect x="1438" y="180" width="62" height="42"/><rect x="1438" y="229" width="62" height="92"/></g>
      <g fill="#10b184"><rect x="1036" y="139" width="61" height="12" rx="5"/><rect x="1036" y="160" width="61" height="12" rx="5"/><rect x="920" y="198" width="58" height="13" rx="5"/><rect x="931" y="329" width="45" height="12" rx="5"/><rect x="931" y="343" width="45" height="12" rx="5"/></g><rect x="931" y="357" width="45" height="12" rx="5" fill="#4996b2"/>
      <g fill="none" stroke="#ccc"><rect x="922" y="251" width="55" height="13"/><rect x="922" y="268" width="16" height="26"/><rect x="942" y="268" width="16" height="26"/><rect x="961" y="268" width="16" height="26"/><rect x="922" y="298" width="16" height="26"/><rect x="942" y="298" width="16" height="26"/></g>
      <rect x="828" y="697" width="675" height="17" fill="#e6e6e6"/><rect x="1251" y="697" width="26" height="17" fill="#fff"/><rect x="828" y="714" width="675" height="13" fill="#ebebeb"/>
    </svg>
  </div>
</div>

<script>
const dims = [['hash','b','Bikeid',66],['hash','g','Birth Year',105],['abc','b','End Station Name',198],['hash','b','Gender',80],['abc','b','Start Station Name',211],['cal','b','Starttime',104],['cal','b','Stoptime',101],['abc','b','Usertype',99],['abc','b','Measure Names',177,1]];
const meas = [['hash','g','End Station Id',152],['globe','g','End Station Latitude',222],['globe','g','End Station Longitude',241],['hash','g','F1',25],['hash','g','Start Station Id',165],['globe','g','Start Station Latitude',235],['globe','g','Start Station Longitude',254],['hash','g','Tripduration',131],['hash','g','Number of Records',212,1,1],['hash','g','Measure Values',171,1]];
const fieldRow = ([ic, col, t, w, it, eq]) => {
  const icon = ic === 'abc' ? '<span class="text-[20px]" data-w="31">Abc</span>'
    : ic === 'hash' ? '<svg width="20" height="20"><use href="#hash" width="20" height="20"/></svg>'
    : ic === 'globe' ? '<svg width="24" height="24"><use href="#globe" width="24" height="24"/></svg>'
    : '<svg class="ml-1" width="30" height="28"><use href="#cal" width="30" height="28"/></svg>';
  return `<div class="flex h-[42.100px] items-center"><div class="relative ml-[41px] flex w-[34px] items-center justify-center pt-1 ${col === 'b' ? 'text-[#327fa3]' : 'text-[#3fa47d]'}">${eq ? '<i class="absolute top-[11px] -left-px h-[6px] w-[7px] border-y-2 border-[#3fa47d]"></i>' : ''}${icon}</div><span class="ml-5 ${it ? 'italic' : ''}" data-w="${w}">${t}</span></div>`;
};
document.getElementById('dims').innerHTML = dims.map(fieldRow).join('');
document.getElementById('meas').innerHTML = meas.map(fieldRow).join('');

const marks = [['Color',48,'<svg width="26" height="27"><use href="#dots4" width="26" height="27"/></svg>'],['Size',37,'<svg width="29" height="29"><use href="#size" width="29" height="29"/></svg>'],['Label',49,'<svg width="28" height="25"><use href="#tbox" width="28" height="25"/></svg>'],['Detail',51,'<svg width="32" height="24" viewBox="0 0 32 24" fill="none" stroke="#666" stroke-width="1.800"><circle cx="16" cy="5" r="4.500" fill="#666" stroke="none"/><circle cx="5" cy="18" r="3.800"/><circle cx="16" cy="18" r="3.800"/><circle cx="27" cy="18" r="3.800"/></svg>'],['Tooltip',61,'<svg width="28" height="27" viewBox="0 0 28 27" fill="none" stroke="#666" stroke-width="2"><path d="M1 2H27V19H20V26L13 19H1Z"/></svg>']];
document.getElementById('marks').innerHTML = marks.map(([t,w,i]) => `<div class="flex h-[84px] flex-col items-center border-2 border-[#d4d4d4] text-[#555]"><div class="flex h-[52px] items-center">${i}</div><div class="flex h-6 items-center text-[#333]"><span data-w="${w}">${t}</span></div></div>`).join('');

document.getElementById('legend').innerHTML = ['4,328','5,000','5,500','6,000','6,500','7,151'].map(v => `<div class="flex h-[39.900px] items-center text-[23px]"><span class="ml-[7px] text-[21px] text-[#555]" data-w="38">Abc</span><span class="ml-3.5" data-w="63">${v}</span></div>`).join('');

document.getElementById('tabs').insertAdjacentHTML('beforeend', Array.from({length: 22}, (_, i) => `<div class="flex shrink-0 items-center border-r-2 border-[#c8c8c8] pl-[13px] ${i < 10 ? 'w-[114px]' : 'w-[130.200px]'} ${i === 16 ? 'bg-white font-bold text-[#333]' : ''}"><span data-w="${i < 10 ? 84 : i === 16 ? 105 : 99}">Sheet ${i}</span></div>`).join(''));

/* Station marks: [view origin x, y, units per px x, y, points] */
const shade = {a:'#bde5da', b:'#9fd3d2', c:'#80c0cb', d:'#60afc4', e:'#4a98b8', f:'#457fa8'};
const stations = [
 [1180,760,2.529,2.8,'1355,8d 1253,70a 1324,276f 1158,363a 1185,519c 1226,521b 1243,539d 1566,512b 1140,610e 1031,658c 1028,737c 989,710d 1204,746b 1215,728c 852,761c 919,838a 972,908a 888,944e 816,977b 1073,982a 754,1009a 750,1040c 794,1085b 1133,1034a 1147,1173b 1219,1181c 610,1205a 728,1283e 1098,1265c 1083,1342c 1068,1373e 1229,1367a 696,1377d 830,1400d 890,1394e 969,1420c 1161,1424b 631,1461f 713,1470b 705,1448f 1099,1443c 988,1474d 1100,1490f 1210,1472e 1326,1496c'],
 [1180,1280,2.529,2.7034,'1056,92b 562,152b 643,143e 625,160f 690,159d 718,203c 1015,170e 1105,155e 1160,203c 606,319d 972,286d 1073,314b 751,351b 1127,350f 789,390e 1030,417e 1069,404b 558,440f 1041,467d 669,501b 627,526f 622,542d 979,564c 960,572a 972,579b 463,618d 454,647f 770,623b 641,757f 805,753d 735,800d 890,777d 925,772b 940,758d 957,758d 667,831a 941,882d 922,925b 877,953a 616,985c 789,969e 847,979d 880,997c 294,1029f 992,1076c 699,1159a 438,1198d 252,1227b 547,1266c 825,1196a 962,1216c 945,1325c 548,1414d 494,1476a 442,1498b 751,1482b 881,1451c 1555,1535a'],
 [1550,370,2.24,2.6133,'743,227e 838,272d 412,596b 584,672f 604,680c 724,679f 810,1212d 882,1359a'],
 [1700,370,1.2544,1.0116,'396,1500b 470,1511b']];
const labels = [
 [1550,370,2.24,2.6133,[['Central Park North & Adam Clayton Powell Blvd',199,1286,247],['Central Park West & W 72 St',261,912,690],['Columbus Ave & W 72 St',96,651,1051],['1 Ave & E 68 St',642,979,1234],['Broadway & W 58 St',113,578,1297],['8 Ave & W 52 St',19,375,1381],['1 Ave & E 62 St',714,1051,1381]]],
 [1180,760,2.529,2.8,[['Broadway & W 56 St',924,1448,544],['Broadway & W 49 St',878,1402,633],['11 Ave & W 59 St',636,1070,785],['W 42 St & Dyer Ave',726,1218,931],['Broadway & W 36 St',873,1396,1059],['E 40 St & 5 Ave',959,1340,1199],['Pershing Square South',803,1391,1288],['Broadway & W 32 St',808,1331,1395],['Broadway & W 29 St',726,1249,1496]]],
 [1180,1280,2.529,2.7034,[['W 16 St & The High Line',255,862,174],['E 33 St & 2 Ave',915,1293,179],['E 20 St & Park Ave',742,1208,308],['E 20 St & FDR Drive',822,1318,428],['Greenwich Ave & Charles St',316,1028,525],['Washington St & Gansevoort St',43,860,671],['MacDougal St & Prince St',317,970,780],['St Marks Pl & 2 Ave',695,1191,904],['Allen St & Rivington St',554,1137,1001],['Little West St & 1 Pl',38,548,1049],['Suffolk St & Stanton St',695,1290,1098],['West Thames St',43,460,1250],['Forsyth St & Broome St',662,1261,1239],['Stanton St & Chrystie St',629,1254,1347],['South St & Gouverneur Ln',214,876,1440]]],
 [1700,370,1.2544,1.0116,[['S 5 Pl & S 4 St',36,208,1503],['N 6 St & Bedford Ave',338,602,1519]]]];
const esc = s => s.replace(/&/g, '&amp;');
let out = '';
for (const [ox,oy,sx,sy,pts] of stations) for (const p of pts.split(' ')) {
  const [x, y] = p.slice(0, -1).split(',').map(Number);
  out += `<circle cx="${(ox+x/sx).toFixed(1)}" cy="${(oy+y/sy).toFixed(1)}" r="6.800" fill="${shade[p.slice(-1)]}" fill-opacity=".92" stroke="#666" stroke-opacity=".8" stroke-width="1.200"/>`;
}
for (const [ox,oy,sx,sy,ls] of labels) for (const [t,x0,x1,y] of ls)
  out += `<text x="${(ox+x0/sx-1).toFixed(1)}" y="${(oy+y/sy).toFixed(1)}" textLength="${((x1-x0)/sx+2).toFixed(1)}" font-size="22.300" fill="#111">${esc(t)}</text>`;
out += '<text x="776" y="1906" textLength="247" font-size="16" fill="#777" font-family="Liberation Sans, Arial, sans-serif">© 2019 Mapbox © OpenStreetMap</text>';
document.getElementById('map').insertAdjacentHTML('beforeend', out);

/* Preview thumbnail texts: [text, x, baseline, width] */
const mt = (t,x,y,w,f='#333',s=9,b=400) => `<text x="${x}" y="${y}" textLength="${w}" lengthAdjust="spacingAndGlyphs" font-size="${s}" font-weight="${b}" fill="${f}">${esc(t)}</text>`;
let m = mt('Tableau Public - Tableau HW - CitiBike',1122,108,96) + mt('Most Popular Bike Stations ( Start and Stop )',1122,199,174,'#3a3a98',15,600) + mt('Show Me',1471,127,21) + mt('Data',836,148,11,'#222',9,700) + mt('Analytics',866,148,21) + mt('CitiBikeAll_2017',846,165,40) + mt('Dimensions',836,184,27,'#222',9,700) + mt('Measures',836,443,22,'#222',9,700) + mt('Columns',993,148,21) + mt('Rows',993,169,14) + mt('Pages',921,149,13) + mt('Filters',921,190,13) + mt('Marks',921,242,13) + mt('AVG(End Station Long..',1041,149,50,'#fff') + mt('AVG(End Station Latit..',1041,169,50,'#fff') + mt('SUM(Number of Rec..',925,208,48,'#fff') + mt('SUM(Number ..',936,338,35,'#fff') + mt('SUM(Number ..',936,352,35,'#fff') + mt('Start Station N..',936,366,35,'#fff') + mt('SUM(Number of Recor...',1440,191,56) + mt('SUM(Number of Recor...',1440,241,56) + mt('4,324',1440,207,12) + mt('7,169',1486,207,12);
dims.forEach((d,i) => m += mt(d[2],848,198+i*12.9,d[3]*.2));
meas.forEach((d,i) => m += mt(d[2],848,457+i*12.9,d[3]*.2));
['4,328','5,000','5,500','6,000','6,500','7,151'].forEach((v,i) => m += mt('Abc '+v,1440,256+i*12.2,22));
m += mt('Data Source',838,708,27,'#666');
for (let i=0;i<23;i++) m += mt('Sheet '+i, i<10 ? 885+i*23.5 : 1124+(i-10)*26.3, 708, 20, '#666');
m += mt('114 marks   1 row by 1 column   SUM of AVG(End Station Longitude)',834,723,160);
[[1299,237,50,'Broadway & Roebling St'],[1299,268,49,'Scholes St & Manhattan Av'],[1098,302,47,'Cadman Plaza & Bridge St'],[1142,316,43,'Nassau St & Navy St'],[1159,331,38,'Front St & Gold St'],[1030,364,70,'Columbia Heights & Cranberry St'],[1130,406,47,'Carlton Ave & Park Ave'],[1148,422,59,'Myrtle Ave & St Edwards St'],[1258,423,65,'Macon St & Tompkins Ave'],[1045,449,43,'State St & Court St'],[1163,451,64,'Clermont Ave & Lafayette Ave'],[1332,456,51,'Lewis Ave & Madison St'],[1190,464,53,'Monroe St & Classon Ave'],[1026,470,53,'Columbia St & Degraw St'],[1026,482,46,'Columbia St & Kane St'],[1084,478,43,'Bond St & Bergen St'],[1160,476,55,'Fulton St & Grand Ave'],[1173,486,64,'Washington Ave & Greene'],[1261,483,55,'Monroe St & Bedford Ave'],[1035,497,46,'Clinton St & Union St'],[1087,496,45,'Pacific St & Nevins St'],[1033,517,51,'Carroll St & Columbia St'],[1168,518,58,'Underhill Ave & Pacific'],[1342,515,45,'Fulton St & Utica Ave'],[1066,527,47,'Degraw St & Hoyt St'],[1312,530,55,'Halsey St & Tompkins Ave'],[1018,561,54,'Van Brunt St & Wolcott'],[1090,555,44,'Union St & 4 Ave'],[1128,567,41,'Douglass St & 4 Ave'],[1047,584,33,'Smith St & 9 St'],[1126,588,41,'Prospect Pl & 6 Ave'],[1004,642,32,'Smith St & 3 St'],[1119,637,37,'Carroll St & 6 Ave'],[1140,658,39,'Garfield Pl & 8 Ave'],[1083,670,27,'6 Ave & 9 St']].forEach(([x,y,w,t]) => m += mt(t,x,y,w,'#222',9) + `<ellipse cx="${x+w/2}" cy="${y-3}" rx="2" ry="3" fill="#3f7f9c" fill-opacity=".8"/>`);
document.getElementById('mini').insertAdjacentHTML('beforeend', m);

/* Spread each label over its designed width; repeated when styles or fonts arrive */
function fitLabels() {
  const all = [...document.querySelectorAll('[data-w]')];
  all.forEach(e => Object.assign(e.style, {display: 'inline-block', whiteSpace: 'pre', flexShrink: 0, letterSpacing: '0px', width: 'max-content'}));
  const widths = all.map(e => e.getBoundingClientRect().width);
  all.forEach((e, i) => {
    e.style.letterSpacing = ((Number(e.dataset.w) + 2 - widths[i]) / e.textContent.length).toFixed(3) + 'px';
    e.style.width = e.dataset.w + 'px';
  });
}
fitLabels();
new ResizeObserver(fitLabels).observe(document.querySelector('aside'));
window.addEventListener('load', fitLabels);
document.fonts.ready.then(fitLabels);
[50, 200, 500].forEach(t => setTimeout(fitLabels, t));
</script>
</body>
</html>
